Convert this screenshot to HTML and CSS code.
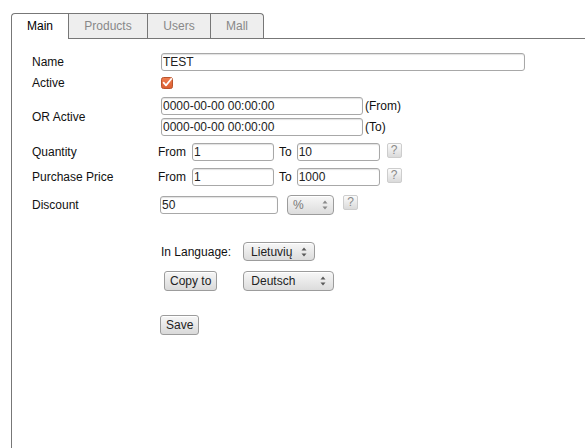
FILE: index.html
```html
<!DOCTYPE html>
<html lang="en">
<head>
<meta charset="utf-8">
<title>Edit item</title>
<link rel="stylesheet" href="styles.css">
</head>
<body>
<div class="page">
  <ul class="tabs">
    <li class="tab tab-main active">Main</li>
    <li class="tab tab-products">Products</li>
    <li class="tab tab-users">Users</li>
    <li class="tab tab-mall">Mall</li>
  </ul>

  <div class="panel">
    <form class="form">
      <div class="row row-name">
        <label class="lbl">Name</label>
        <input class="txt w-name" type="text" value="TEST">
      </div>

      <div class="row row-active">
        <label class="lbl">Active</label>
        <span class="check">
          <svg width="12" height="12" viewBox="0 0 12 12">
            <defs>
              <linearGradient id="chk" x1="0" y1="0" x2="0" y2="1">
                <stop offset="0" stop-color="#ef7f52"/>
                <stop offset="1" stop-color="#db5d2f"/>
              </linearGradient>
            </defs>
            <rect x="0.5" y="0.5" width="11" height="11" rx="2" fill="url(#chk)" stroke="#b9542d"/>
            <path d="M2.6 5.6 L5 8.4 L10.4 1.8" fill="none" stroke="#fff" stroke-width="1.7" stroke-linecap="round" stroke-linejoin="round"/>
          </svg>
        </span>
      </div>

      <div class="row row-dates">
        <label class="lbl">OR Active</label>
        <div class="stack">
          <div class="line"><input class="txt w-date" type="text" value="0000-00-00 00:00:00"><span class="note">(From)</span></div>
          <div class="line"><input class="txt w-date" type="text" value="0000-00-00 00:00:00"><span class="note">(To)</span></div>
        </div>
      </div>

      <div class="row row-qty">
        <label class="lbl">Quantity</label>
        <span class="word">From</span>
        <input class="txt w-from" type="text" value="1">
        <span class="word word-to">To</span>
        <input class="txt w-to" type="text" value="10">
        <span class="help">?</span>
      </div>

      <div class="row row-price">
        <label class="lbl">Purchase Price</label>
        <span class="word">From</span>
        <input class="txt w-from" type="text" value="1">
        <span class="word word-to">To</span>
        <input class="txt w-to" type="text" value="1000">
        <span class="help">?</span>
      </div>

      <div class="row row-discount">
        <label class="lbl">Discount</label>
        <input class="txt w-discount" type="text" value="50">
        <span class="sel sel-unit is-dim">
          <span>%</span>
          <svg class="arrows" width="6" height="10" viewBox="0 0 6 10"><path d="M3 0.5 L5.5 3.5 H0.5 Z M3 9.5 L5.5 6.5 H0.5 Z"/></svg>
        </span>
        <span class="help help-discount">?</span>
      </div>

      <div class="lang">
        <div class="lang-row row-in">
          <span class="in-label">In Language:</span>
          <span class="sel sel-lang">
            <span>Lietuvių</span>
            <svg class="arrows" width="6" height="10" viewBox="0 0 6 10"><path d="M3 0.5 L5.5 3.5 H0.5 Z M3 9.5 L5.5 6.5 H0.5 Z"/></svg>
          </span>
        </div>
        <div class="lang-row row-copy">
          <button class="btn btn-copy" type="button">Copy to</button>
          <span class="sel sel-target">
            <span>Deutsch</span>
            <svg class="arrows" width="6" height="10" viewBox="0 0 6 10"><path d="M3 0.5 L5.5 3.5 H0.5 Z M3 9.5 L5.5 6.5 H0.5 Z"/></svg>
          </span>
        </div>
        <div class="lang-row row-save">
          <button class="btn btn-save" type="button">Save</button>
        </div>
      </div>
    </form>
  </div>
</div>
</body>
</html>
```

FILE: styles.css
```css
* {
  box-sizing: border-box;
}

html,
body {
  margin: 0;
  height: 100%;
}

body {
  font: 12px "Liberation Sans", Arial, sans-serif;
  color: #111;
  background: #fff;
  overflow: hidden;
}

.page {
  padding: 13px 0 0 11px;
}

/* tab strip */
.tabs {
  display: flex;
  list-style: none;
  margin: 0;
  padding: 0;
  height: 26px;
  border-bottom: 1px solid #777;
}

.tab {
  height: 25px;
  line-height: 24px;
  text-align: center;
  color: #888;
  background: #eee;
  border-top: 1px solid #777;
  border-left: 1px solid #777;
}

.tab-main {
  width: 57px;
  border-top-left-radius: 4px;
}

.tab-products {
  width: 79px;
}

.tab-users {
  width: 63px;
}

.tab-mall {
  width: 54px;
  border-right: 1px solid #777;
  border-top-right-radius: 4px;
}

.tab.active {
  color: #000;
  background: #fff;
  height: 26px;
  margin-bottom: -1px;
  position: relative;
}

/* content panel */
.panel {
  height: 420px;
  border-left: 1px solid #777;
  padding: 13px 0 0 20px;
}

.form {
  margin: 0;
}

.row {
  display: flex;
  align-items: center;
}

.lbl {
  width: 126px;
  flex: none;
}

.row-name {
  height: 20px;
}

.row-active {
  height: 22px;
}

.row-dates {
  height: 45px;
}

.row-qty {
  height: 26px;
}

.row-price {
  height: 24px;
}

.row-discount {
  height: 32px;
}

/* text fields */
.txt {
  height: 18px;
  margin: 0 0 0 2px;
  padding: 0 1px;
  font: 12px "Liberation Sans", Arial, sans-serif;
  color: #222;
  background: #fff;
  border: 1px solid #a8a8a8;
  border-radius: 3px;
  box-shadow: inset 0 1px 1px rgba(0, 0, 0, 0.12);
  outline: none;
}

.w-name {
  width: 364px;
  margin-left: 3px;
}

.w-date {
  width: 202px;
  margin-left: 3px;
}

.w-from {
  width: 82px;
  margin-left: 6px;
}

.w-to {
  width: 83px;
  margin-left: 5px;
}

.w-discount {
  width: 118px;
}

.check {
  display: flex;
  margin-left: 3px;
}

.check svg {
  display: block;
}

.stack {
  display: flex;
  flex-direction: column;
  gap: 3px;
}

.line {
  display: flex;
  align-items: center;
}

.note {
  margin-left: 2px;
}

.word-to {
  margin-left: 5px;
}

/* small help badge */
.help {
  width: 15px;
  height: 15px;
  margin: 0 0 4px 7px;
  border: 1px solid #cdcdcd;
  border-radius: 2px;
  background: linear-gradient(#fbfbfb, #dadada);
  color: #8a8a8a;
  font-size: 12px;
  line-height: 13px;
  text-align: center;
}

.help-discount {
  margin-left: 9px;
  margin-bottom: 6px;
}

/* drop-downs and buttons */
.sel {
  display: inline-flex;
  align-items: center;
  justify-content: space-between;
  height: 20px;
  padding: 0 7px 0 7px;
  border: 1px solid #9c9c9c;
  border-radius: 4px;
  background: linear-gradient(#f7f7f7, #dcdcdc);
  box-shadow: inset 0 1px 0 #fff;
  color: #222;
}

.sel .arrows {
  display: block;
  fill: #5a5a5a;
}

.sel.is-dim {
  color: #777;
}

.sel.is-dim .arrows {
  fill: #8a8a8a;
}

.sel-unit {
  width: 47px;
  margin-left: 9px;
  padding-left: 5px;
  padding-right: 5px;
}

.sel-lang {
  width: 72px;
  height: 19px;
  margin-left: 12px;
}

.sel-target {
  width: 91px;
  margin-left: 26px;
}

.btn {
  height: 20px;
  padding: 0 5px;
  font: 12px "Liberation Sans", Arial, sans-serif;
  color: #222;
  border: 1px solid #9c9c9c;
  border-radius: 3px;
  background: linear-gradient(#f7f7f7, #d9d9d9);
  box-shadow: inset 0 1px 0 #fff;
}

/* language block */
.lang {
  margin-left: 126px;
}

.lang-row {
  display: flex;
  align-items: center;
  height: 22px;
}

.row-in {
  height: 21px;
  margin-top: 20px;
}

.in-label {
  margin-left: 3px;
}

.row-copy {
  margin-top: 8px;
}

.btn-copy {
  margin-left: 6px;
}

.row-save {
  margin-top: 22px;
}

.btn-save {
  margin-left: 2px;
}
```
